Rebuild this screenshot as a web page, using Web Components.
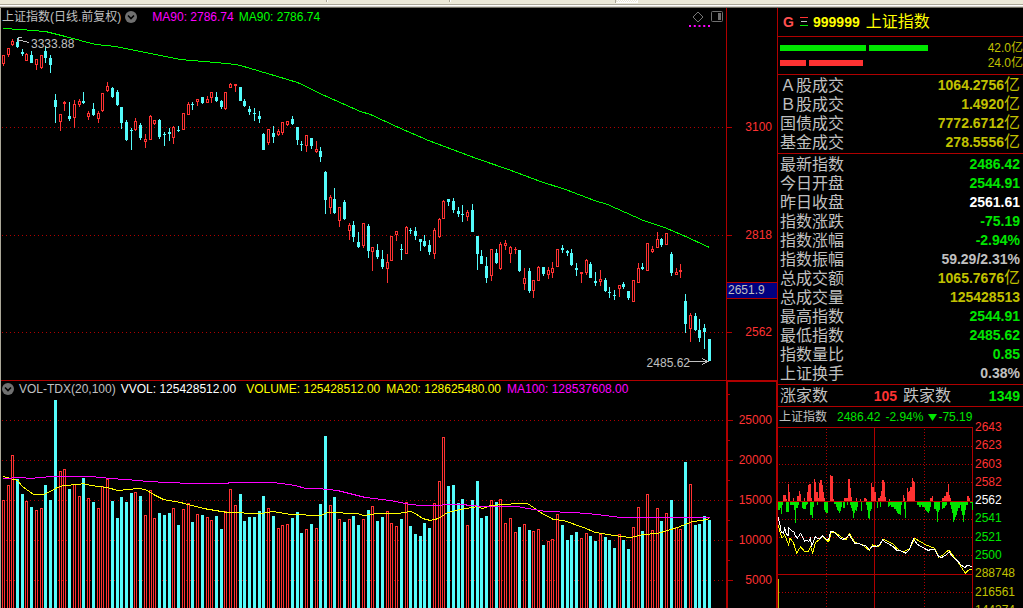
<!DOCTYPE html>
<html lang="zh-CN">
<head>
<meta charset="utf-8">
<title>上证指数</title>
<style>
html,body{margin:0;height:100%;background:#000}
body{font:12px/16px "Liberation Sans","Noto Sans CJK SC",sans-serif;color:#c0c0c0;overflow:hidden}
</style>
</head>
<body>
<quote-app></quote-app>
<script>
const RED = '#ff3232', CYAN = '#54fcfc', LINE = '#b00000';

function define(name, html, setup) {
  const tpl = document.createElement('template');
  tpl.innerHTML = html;
  customElements.define(name, class extends HTMLElement {
    constructor() {
      super();
      this.attachShadow({ mode: 'open' }).append(tpl.content.cloneNode(true));
    }
    connectedCallback() { if (setup) setup(this.shadowRoot, this); }
  });
}

/* One row per session: direction, high, body top, body bottom, low, volume top. */
const sessions = `R 55 55 64 66 500|R 48 48 55 57 485|R 39 41 45 46 455|C 38 42 47 48 479|C 49 52 54 56 494|R 53 54 61 61 501|C 51 55 63 63 507|R 59 59 65 70 510|R 55 55 68 69 508|C 46 51 58 63 485|C 55 58 65 73 500|C 94 100 107 123 400|R 114 114 122 131 471|R 101 102 104 111 469|C 102 116 119 121 489|R 100 104 118 128 484|R 99 101 105 107 496|C 92 101 103 104 478|R 111 113 117 120 498|C 103 109 115 116 502|R 111 113 119 123 508|R 93 93 111 112 486|R 82 86 91 92 479|C 87 88 97 98 501|C 90 92 105 106 518|C 107 107 123 129 497|C 120 122 140 141 502|C 128 130 131 150 493|R 118 121 130 131 492|C 123 125 138 140 496|R 134 139 142 148 515|R 115 116 140 140 490|R 120 120 124 125 518|C 119 120 137 139 513|C 132 134 135 146 515|C 128 132 134 141 513|R 126 127 138 144 508|C 126 130 131 132 525|R 113 113 130 130 509|R 102 104 115 115 503|C 102 104 105 110 522|R 99 99 102 106 514|C 97 97 103 104 515|R 96 99 103 103 517|R 92 92 98 103 520|C 92 97 101 102 516|C 100 101 107 109 529|R 92 92 109 110 511|R 83 84 88 88 489|R 84 84 86 92 505|C 87 87 101 101 494|C 99 101 106 107 521|C 106 109 112 115 517|C 108 113 114 121 517|C 111 116 119 123 511|C 133 134 150 150 496|R 129 129 143 145 508|C 126 133 137 143 516|R 129 131 135 136 528|R 122 122 133 135 525|R 121 121 125 126 524|C 116 119 124 125 518|C 127 127 140 145 512|C 141 144 145 151 533|R 135 135 146 152 529|C 138 138 146 149 524|R 141 149 152 153 528|C 147 151 157 162 504|C 171 172 200 214 436|R 195 197 208 214 505|C 188 199 213 214 497|R 207 207 221 227 519|C 200 202 219 220 522|R 223 225 231 240 519|C 221 225 237 242 516|C 232 242 247 248 525|R 223 223 246 248 519|C 224 226 251 258 510|R 247 247 252 271 506|C 244 250 257 259 521|C 250 259 267 269 517|R 254 262 269 283 511|R 236 236 261 261 523|R 231 231 235 241 526|C 244 249 250 260 519|R 226 227 254 254 502|C 228 230 231 234 526|C 227 231 236 240 534|C 239 239 242 251 536|C 235 241 246 247 523|C 240 245 252 255 528|R 228 230 254 259 503|R 218 219 237 238 481|R 200 201 219 219 437|C 199 199 202 206 486|C 198 201 210 213 485|C 207 211 214 217 503|C 205 214 215 222 499|R 210 212 217 221 525|C 204 210 232 232 500|C 236 236 254 270 481|C 250 256 264 264 518|C 257 266 278 283 516|R 249 249 276 281 500|C 249 253 263 264 502|R 242 244 269 270 499|R 240 243 246 250 523|R 246 247 254 263 518|R 247 249 250 254 532|C 250 250 271 272 527|R 268 278 284 290 524|C 268 271 291 293 530|R 280 280 291 298 531|R 266 267 281 281 529|C 267 267 274 276 545|R 267 270 275 279 541|R 262 268 273 278 539|R 249 249 267 267 514|C 245 248 250 253 525|C 250 251 253 256 540|C 249 253 265 266 535|C 263 268 270 276 532|R 272 272 274 283 538|R 259 260 273 275 533|C 262 264 278 278 536|C 272 281 283 286 541|R 270 279 282 286 534|C 278 280 291 292 537|C 287 292 293 298 540|C 290 295 296 300 548|R 285 285 289 297 534|C 282 284 287 289 540|C 291 291 298 300 549|R 280 280 302 302 527|R 263 268 283 283 507|C 263 267 269 270 531|R 243 243 271 271 494|R 246 249 252 253 530|R 232 239 248 248 508|C 238 239 245 247 521|R 233 233 245 245 513|C 252 254 273 276 500|R 268 272 275 275 527|R 264 270 272 278 529|C 294 301 324 333 462|R 313 315 329 342 484|C 313 316 330 331 525|C 319 330 338 342 524|C 324 328 332 349 516|C 339 339 361 361 520`
  .split('|').map((s, i) => {
    const [dir, ...n] = s.split(' ');
    const [high, top, bottom, low, vol] = n.map(Number);
    return { up: dir === 'R', high, top, bottom, low, vol, x: Math.floor(3.3 + i * 4.738) };
  });

const rect = (x, y, w, h, fill) => `<rect x="${x}" y="${y}" width="${w}" height="${h}" fill="${fill}"/>`;
const hollow = (x, y, h) => `<rect x="${x + .5}" y="${y + .5}" width="2" height="${h - 1}" fill="#000" stroke="${RED}"/>`;
const line = (pts, stroke) => `<polyline points="${pts}" fill="none" stroke="${stroke}" transform="translate(.5 .5)"/>`;
const dots = (y, x2) => `<path d="M2 ${y + .5}H${x2}" stroke="${LINE}" stroke-dasharray="1 3"/>`;

define('tool-strip', `<style>
:host{display:block;height:8px;box-sizing:border-box;background:#ece9d8;position:relative}
i{display:block;height:4px}
.e{height:1px;background:#aca899}.w{height:1px;background:#fff}.v{height:1px;background:#d4d0c8}.d{height:1px;background:#716f64}
svg{position:absolute;left:0;top:0}
</style><i></i><i class="e"></i><i class="w"></i><i class="v"></i><i class="d"></i>
<svg width="700" height="4" shape-rendering="crispEdges"><path d="M326.5 0V2M449.5 0V2M615.5 0V3" stroke="#aca899"/><path d="M327.5 0V2M450.5 0V2M616 2.5H638M637.5 0V3" stroke="#fff"/><path d="M617 .5H637M618 1.5H637" stroke="#fff" stroke-dasharray="1 1"/></svg>`);

define('fold-button', `<style>
:host{display:block;width:12px;height:12px}
button{all:unset;display:block;width:12px;height:12px;cursor:pointer}svg{display:block}
</style><button aria-label="指标菜单"><svg width="12" height="12" viewBox="0 0 12 12"><circle cx="6" cy="6" r="6" fill="#707070"/><path d="M3 4.500 6 7.500 9 4.500" fill="none" stroke="#000" stroke-width="1.600"/></svg></button>`);

define('chart-header', `<style>
:host{display:flex;align-items:center;white-space:nowrap;flex:none;overflow:visible}
::slotted(.push){margin-left:auto}
</style><slot></slot>`);

define('view-tools', `<style>
:host{display:flex;gap:7px;margin-right:3px}
button{all:unset;display:block;height:12px;cursor:pointer}svg{display:block;overflow:visible}
</style><button aria-label="标记"><svg width="12" height="12" viewBox="0 0 12 12"><path d="M6 1 11 6 6 11 1 6Z" fill="none" stroke="#777"/><path d="M-3 15H18" stroke="#f0f" stroke-width="2" stroke-dasharray="2 2.750"/></svg></button>
<button aria-label="侧栏"><svg width="12" height="12" viewBox="0 0 12 12"><rect x=".5" y=".5" width="11" height="10" rx="1" fill="none" stroke="#707070"/><rect x="7" y="2" width="3" height="7" fill="#707070"/></svg></button>`);

define('price-chart', `<style>
:host{display:flex;flex-direction:column;min-width:0;min-height:0;position:relative}
chart-header{height:18px;padding-left:1px}
.g{flex:1;min-height:0;width:100%;display:block}
fold-button{margin:0 15px 0 4px}
.m{color:#f0f;margin-right:5px}.n{color:#0f0}
.hi,.lo{position:absolute;line-height:16px}
.hi{left:30px;top:28px}.lo{right:36px;bottom:9px}
</style>
<chart-header><span>上证指数(日线.前复权)</span><fold-button></fold-button><span class="m">MA90: 2786.74</span><span class="n">MA90: 2786.74</span><view-tools class="push"></view-tools></chart-header>
<svg class="g" viewBox="1 26 725 354" preserveAspectRatio="none" shape-rendering="crispEdges"></svg>
<span class="hi">3333.88</span><span class="lo">2485.62</span>`, root => {
  let s = dots(127, 724) + dots(235, 724) + dots(332, 724);
  for (const c of sessions) {
    const col = c.up ? RED : CYAN;
    s += rect(c.x, c.high, 1, Math.max(1, c.low - c.high), col);
    const h = Math.max(1, c.bottom - c.top);
    s += c.up && h > 2 ? hollow(c.x - 1, c.top, h) : rect(c.x - 1, c.top, 3, h, col);
  }
  s += line('3,28 20,29 45,31 65,36 95,44 115,46 135,50 160,55 180,59 215,62 235,64 240,65 250,68 267,73 297,82 326,96 360,111 370,114 398,127 428,140 452,149 476,158 508,169 540,181 565,189 594,200 607,204 643,220 664,227 683,235 709,247', '#0f0');
  s += '<path d="M29 42.500 17 39.500M22 37.500H18V42" fill="none" stroke="#c0c0c0"/><path d="M688 361.500H708M702 358.500 708 361.500 702 364.500" fill="none" stroke="#c0c0c0"/>';
  root.querySelector('.g').innerHTML = s;
});

define('volume-chart', `<style>
:host{display:flex;flex-direction:column;min-width:0;min-height:0;border-top:1px solid #b00000}
chart-header{height:16px;padding-left:1px}
.g{flex:1;min-height:0;width:100%;display:block}
fold-button{margin-right:5px}
.a{margin-right:5px}.b{color:#fff;margin-right:10px}.c{color:#ff0;margin-right:6px}.d{color:#f0f}
</style>
<chart-header><fold-button></fold-button><span class="a">VOL-TDX(20,100)</span><span class="b">VVOL: 125428512.00</span><span class="c">VOLUME: 125428512.00</span><span class="c">MA20: 128625480.00</span><span class="d">MA100: 128537608.00</span></chart-header>
<svg class="g" viewBox="1 397 725 211" preserveAspectRatio="none" shape-rendering="crispEdges"></svg>`, root => {
  let s = [420, 460, 500, 540, 580].map(y => dots(y, 724)).join('');
  for (const c of sessions) s += c.up ? hollow(c.x - 1, c.vol, 220) : rect(c.x - 1, c.vol, 3, 220, CYAN);
  s += line('3,476 17,480 22,486 33,494 43,494 50,491 57,487 63,485 78,484 83,483 90,485 107,487 117,490 128,489 137,488 145,489 153,494 163,499 180,502 203,508 227,512 240,512 247,513 260,513 273,511 290,514 320,515 327,512 357,513 363,515 377,513 397,513 410,511 415,513 422,518 430,520 438,518 447,512 460,509 477,506 482,508 490,505 517,503 527,503 533,507 540,512 553,519 563,520 583,527 595,532 613,535 630,537 643,534 657,533 677,527 692,521 702,520 709,518', '#ff0');
  s += line('3,478 20,477 30,478 39,477 53,476 90,476 110,478 138,480 147,481 167,482 192,483 227,483 229,482 271,482 281,483 295,485 305,488 318,488 337,490 365,497 390,500 410,504 420,505 440,505 443,504 465,504 467,505 485,506 517,506 527,508 545,511 573,512 597,514 620,517 709,517', '#f0f');
  root.querySelector('.g').innerHTML = s;
});

const axisStyle = `
:host{display:grid;box-sizing:border-box;min-height:0;color:#ff3232;text-align:right}
span{position:relative;padding-right:5px}
span:not(.now)::before{content:"";position:absolute;left:0;top:8px;width:5px;height:1px;background:#b00000}`;
define('price-axis', `<style>${axisStyle}
:host{border-left:1px solid #b00000;grid-template-rows:111fr 16px 92fr 16px 39fr 17px 25fr 16px 40fr}
.now{background:#000080;color:#c0c0c0;border:solid #b00000;border-width:1px 0;box-sizing:border-box;text-align:left;line-height:15px;padding-left:1px}
</style><i></i><span>3100</span><i></i><span>2818</span><i></i><span class="now">2651.9</span><i></i><span>2562</span>`);
define('volume-axis', `<style>${axisStyle}
:host{border:solid #b00000;border-width:2px 1px 0 2px;grid-template-rows:30fr 16px 24fr 16px 24fr 16px 24fr 16px 24fr 16px 20fr}
span{padding-right:4px}
i:not(:first-child)::before{content:"";display:block;width:2px;height:1px;margin-top:12px;background:#b00000}
</style><i></i><span>25000</span><i></i><span>20000</span><i></i><span>15000</span><i></i><span>10000</span><i></i><span>5000</span>`);

define('stock-title', `<style>
:host{display:flex;align-items:center;height:29px;box-sizing:border-box;padding:0 0 1px 5px;font-size:16px;color:#ff0;border-bottom:1px solid #b00000}
.g{color:#ff5050;font-weight:bold;font-size:14px;width:17px}
b{font-size:14px;margin:0 6px 0 5px}svg{display:block}
</style><span class="g">G</span><svg width="8" height="9" viewBox="0 0 8 9" shape-rendering="crispEdges"><path d="M0 .5H8" stroke="#ff3232"/><path d="M1 4.500H7" stroke="#c0c0c0"/><path d="M0 8.500H8" stroke="#00e600"/></svg><b>999999</b><span>上证指数</span>`);

define('flow-bars', `<style>
:host{display:block;height:38px;box-sizing:border-box;padding:3px 0 3px 2px;border-bottom:1px solid #b00000}
div{display:flex;align-items:center;gap:3px;height:15px;color:#c0c000;white-space:nowrap}
i{height:6px}.u{background:#00e600}.d{background:#ff3232}
span{margin-left:auto}
</style>
<div><i class="u" style="width:86px"></i><i class="u" style="width:59px"></i><span>42.0亿</span></div>
<div><i class="d" style="width:26px"></i><i class="d" style="width:54px"></i><span>24.0亿</span></div>`);

define('quote-table', `<style>
:host{display:block;border-bottom:1px solid #b00000}
table{width:100%;border-collapse:collapse}
th,td{padding:0;height:19px;line-height:19px;white-space:nowrap}
th{font-weight:normal;font-size:16px;text-align:left;padding-left:2px}
td{font-weight:bold;font-size:14px;text-align:right;padding-right:3px}
small{font-size:16px;font-weight:normal;line-height:16px}
.y{color:#c0c000}.g{color:#00e600}.w{color:#fff}.s{color:#c0c0c0}
</style><table><tbody></tbody></table>`, (root, host) => {
  root.querySelector('tbody').innerHTML = host.getAttribute('rows').split('|').map(r => {
    const [k, v, c] = r.split(',');
    return `<tr><th scope="row">${k}</th><td class="${c}">${v.replace('亿', '<small>亿</small>')}</td></tr>`;
  }).join('');
});

define('breadth-row', `<style>
:host{display:flex;align-items:center;height:22px;box-sizing:border-box;padding:0 3px 0 2px;font-size:16px;border-bottom:1px solid #b00000}
span{flex:1;display:flex;justify-content:space-between;align-items:center}
span+span{margin-left:6px}
b{font-size:14px}.r{color:#ff3232}.g{color:#00e600}
</style><span>涨家数<b class="r">105</b></span><span>跌家数<b class="g">1349</b></span>`);

define('intraday-chart', `<style>
:host{display:flex;flex-direction:column;flex:1;min-height:0}
header{display:flex;align-items:center;height:20px;padding-left:1px;color:#00e600;white-space:nowrap;flex:none}
header span:first-child{color:#c0c0c0;margin-right:10px}
header span{margin-right:5px}
header svg{margin-right:1px}
.row{display:flex;flex:1;min-height:0}
.g{flex:1;min-width:0;height:181px;display:block}
.l{flex:none;width:48px;height:201px;margin-top:-9px;display:flex;flex-direction:column;justify-content:space-between;line-height:18px}
.r{color:#ff3232}.w{color:#fff}.n{color:#00e600}.y{color:#c0c000}
</style>
<header><span>上证指数</span><span>2486.42</span><span>-2.94%</span><svg width="9" height="8"><path d="M0 1H9L4.500 8Z" fill="#00e600"/></svg><span>-75.19</span></header>
<div class="row"><svg class="g" viewBox="0 0 197 181" preserveAspectRatio="none" shape-rendering="crispEdges"></svg>
<div class="l"><span class="r">2643</span><span class="r">2623</span><span class="r">2603</span><span class="r">2582</span><span class="w">2562</span><span class="n">2541</span><span class="n">2521</span><span class="n">2500</span><span class="y">288748</span><span class="y">216561</span><span class="y">144374</span></div></div>`, root => {
  /* Samples are kept at a third of a pixel. */
  const px = x => x / 3 - 2, py = y => y / 3 - 22;
  const parse = t => t.split(' ').map(p => p.split(',').map(Number));
  const trace = (t, c) => `<polyline points="${parse(t).map(([x, y]) => px(x).toFixed(1) + ',' + py(y).toFixed(1)).join(' ')}" fill="none" stroke="${c}"/>`;
  /* Neighbouring samples touch; isolated ones stay one pixel wide. */
  const span = (list, i) => {
    const x = Math.floor(px(list[i][0])), next = list[i + 1];
    return [x, next && next[0] - list[i][0] <= 6 ? Math.max(1, Math.floor(px(next[0])) - x) : 1];
  };
  let s = '';
  for (const y of [19, 37, 55, 92, 110, 128, 165]) s += `<path d="M1 ${y + .5}H195" stroke="${LINE}" stroke-dasharray="1 2"/>`;
  for (const x of [48, 146]) s += `<path d="M${x + .5} 2V181" stroke="${LINE}" stroke-dasharray="1 2"/>`;
  s += `<path d="M0 .5H195M0 147.500H195M96.500 0V181M194.500 0V181" stroke="${LINE}"/>`;
  const reds = parse('22,270 26,270 30,282 37,237 40,262 52,278 64,272 67,272 70,258 74,268 84,280 94,262 98,240 101,238 106,280 114,222 118,230 122,262 126,278 130,235 134,225 138,240 142,262 146,278 164,210 167,212 172,282 206,280 212,278 218,222 222,250 226,275 240,280 252,282 264,280 270,282 286,234 290,245 294,262 298,262 308,278 314,272 317,258 320,225 324,230 328,275 340,282 382,270 386,278 394,250 398,262 401,258 404,245 408,220 412,228 416,230 464,278 468,272 500,278 506,272 512,262 516,237 520,270 524,280 574,272 580,280');
  reds.forEach(([, y], i) => { const [x, w] = span(reds, i), t = Math.round(py(y)); s += rect(x, t, w, 74 - t, RED); });
  const greens = parse('8,315 12,310 16,328 20,300 30,320 33,322 36,322 44,300 48,300 54,315 58,355 62,310 66,300 78,308 82,312 86,312 90,300 94,298 104,330 108,338 111,305 124,300 146,315 149,320 152,325 155,325 176,298 180,305 184,315 187,318 190,325 193,318 196,305 203,310 206,310 214,300 222,300 226,308 229,318 232,340 235,325 238,315 241,318 244,305 256,318 270,300 273,315 276,340 279,342 282,318 285,312 304,310 312,305 338,305 341,303 344,300 347,305 350,305 353,305 356,312 359,312 362,318 365,325 368,328 371,328 374,330 377,300 386,312 388,338 424,300 430,305 436,300 440,305 444,305 448,315 452,318 455,320 458,325 461,318 464,305 474,312 477,312 480,318 484,352 487,320 490,315 498,312 501,310 504,308 508,302 512,300 522,300 525,312 528,325 531,350 534,345 537,335 540,330 543,318 546,310 552,300 555,318 558,330 562,352 565,330 568,315 571,300 574,300 584,295 589,315');
  greens.forEach(([, y], i) => { const [x, w] = span(greens, i); s += rect(x, 75, w, Math.round(py(y)) - 75, '#00e600'); });
  s += `<path d="M0 74.500H195" stroke="${LINE}"/>`;
  s += trace('6,360 12,380 18,400 26,390 32,405 38,420 42,400 52,412 62,444 74,425 86,440 96,440 104,425 110,446 118,412 130,405 138,392 150,405 158,410 166,382 180,384 190,392 210,405 220,385 228,398 236,412 260,420 280,436 290,420 308,425 322,402 340,412 352,418 362,430 374,438 388,438 402,430 416,400 430,408 450,420 476,430 488,456 500,450 518,435 530,450 545,470 555,485 568,505 578,495 588,492', '#ff0');
  s += trace('4,330 8,345 12,360 16,382 22,385 26,370 30,385 36,392 38,368 44,375 50,380 54,380 58,392 64,400 74,385 80,398 86,408 92,405 98,410 104,397 106,425 112,412 118,395 124,400 130,402 140,392 150,402 158,402 164,380 170,378 180,388 192,400 200,403 212,398 220,388 226,400 236,415 246,415 258,420 270,422 280,434 288,425 308,422 320,405 328,412 340,418 350,424 362,436 374,438 388,445 400,434 412,402 424,418 436,425 456,436 476,432 486,452 496,458 510,450 520,440 530,456 545,468 555,480 566,488 574,480 588,486', '#fff');
  s += rect(0, 152, 1, 30, '#c0c000');
  root.querySelector('.g').innerHTML = s;
});

define('quote-panel', `<style>
:host{display:flex;flex-direction:column;min-height:0;overflow:hidden;border-left:1px solid #b00000}
stock-title,flow-bars,quote-table,breadth-row{flex:none}
quote-table{padding:1px 0}
intraday-chart{flex:1}
</style>
<stock-title></stock-title>
<flow-bars></flow-bars>
<quote-table rows="Ａ股成交,1064.2756亿,y|Ｂ股成交,1.4920亿,y|国债成交,7772.6712亿,y|基金成交,278.5556亿,y"></quote-table>
<quote-table rows="最新指数,2486.42,g|今日开盘,2544.91,g|昨日收盘,2561.61,w|指数涨跌,-75.19,g|指数涨幅,-2.94%,g|指数振幅,59.29/2.31%,s|总成交额,1065.7676亿,y|总成交量,125428513,y|最高指数,2544.91,g|最低指数,2485.62,g|指数量比,0.85,g|上证换手,0.38%,s"></quote-table>
<breadth-row></breadth-row>
<intraday-chart></intraday-chart>`);

define('quote-app', `<style>
:host{display:flex;flex-direction:column;height:100vh}
main{flex:1;min-height:0;display:grid;grid-template:minmax(0,372fr) minmax(0,228fr)/minmax(0,1fr) 51px 246px;border-left:1px solid #aca899}
quote-panel{grid-area:1/3/3/4}
price-chart{grid-area:1/1}price-axis{grid-area:1/2}
volume-chart{grid-area:2/1}volume-axis{grid-area:2/2}
</style>
<tool-strip></tool-strip>
<main><price-chart></price-chart><price-axis></price-axis><volume-chart></volume-chart><volume-axis></volume-axis><quote-panel></quote-panel></main>`);
</script>
</body>
</html>
